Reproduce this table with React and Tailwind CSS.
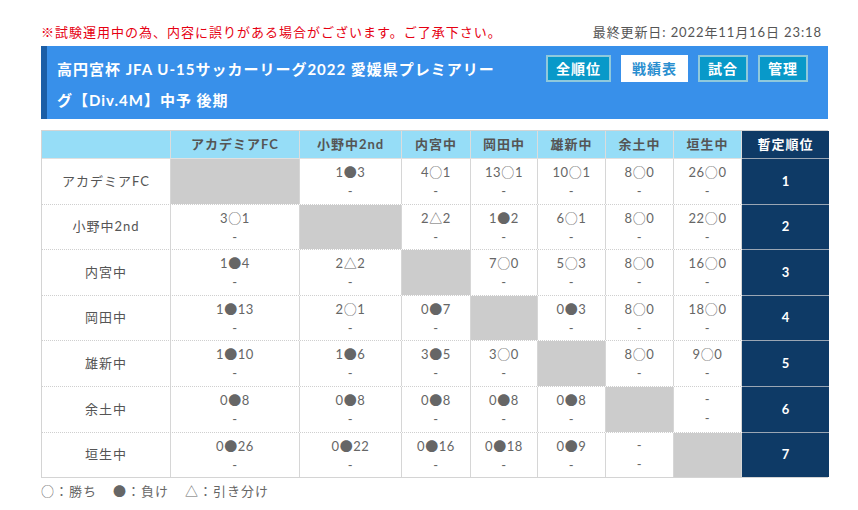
import React from 'react';

const FONT = { fontFamily: 'Lato, "Noto Sans CJK JP", sans-serif' };
const CJK = { fontFamily: '"Noto Sans CJK JP", sans-serif' };

const teams = ['アカデミアFC', '小野中2nd', '内宮中', '岡田中', '雄新中', '余土中', '垣生中'];

// null = 同チーム（グレー）, '-' = 未実施
const results = [
  [null, '1●3', '4○1', '13○1', '10○1', '8○0', '26○0'],
  ['3○1', null, '2△2', '1●2', '6○1', '8○0', '22○0'],
  ['1●4', '2△2', null, '7○0', '5○3', '8○0', '16○0'],
  ['1●13', '2○1', '0●7', null, '0●3', '8○0', '18○0'],
  ['1●10', '1●6', '3●5', '3○0', null, '8○0', '9○0'],
  ['0●8', '0●8', '0●8', '0●8', '0●8', null, '-'],
  ['0●26', '0●22', '0●16', '0●18', '0●9', '-', null],
];

const cols = 'grid grid-cols-[129px_129px_102px_69px_67px_68px_68px_68px_87px]';

// 記号だけ全角フォントで表示
const Score = ({ text }) => {
  const m = text.match(/^(\d+)([○●△])(\d+)$/);
  if (!m) return <span>{text}</span>;
  return (
    <span>
      {m[1]}
      <span style={CJK}>{m[2]}</span>
      {m[3]}
    </span>
  );
};

const NavButton = ({ label, active }) => (
  <button
    className={
      active
        ? 'h-[27px] px-[9px] bg-white border-2 border-white text-[#2a8fd0] text-[14px] font-bold tracking-[1px]'
        : 'h-[27px] px-[8px] bg-[#0899c9] border-2 border-[#8fc9dc] text-white text-[14px] font-bold tracking-[1px]'
    }
  >
    {label}
  </button>
);

export default function App() {
  return (
    <div className="w-[858px] h-[510px] bg-white" style={FONT}>
      <div className="ml-[41px] w-[787px] pt-[22px]">
        {/* 注意書き・更新日 */}
        <div className="flex justify-between items-center h-[20px] text-[13px] leading-[20px]">
          <span className="text-[#e60012] tracking-[1px]">※試験運用中の為、内容に誤りがある場合がございます。ご了承下さい。</span>
          <span className="text-[#555] pr-[6px] tracking-[0.9px]">最終更新日: 2022年11月16日 23:18</span>
        </div>

        {/* タイトルバー */}
        <div className="mt-[4px] h-[73px] bg-[#3890ea] border-l-[6px] border-[#1b5ea6] flex justify-between pl-[10px] pr-[20px]">
          <h1 className="w-[448px] text-white font-bold text-[15px] leading-[31px] pt-[8px] tracking-[1px]">
            高円宮杯 JFA U-15サッカーリーグ2022 愛媛県プレミアリーグ【Div.4M】中予 後期
          </h1>
          <div className="flex gap-[10px] pt-[9px] items-start">
            <NavButton label="全順位" />
            <NavButton label="戦績表" active />
            <NavButton label="試合" />
            <NavButton label="管理" />
          </div>
        </div>

        {/* 戦績表 */}
        <div className="mt-[11px] border border-[#d4d4d4]">
          <div className={`${cols} h-[27px] text-[13px] font-bold`}>
            {['', ...teams].map((t, i) => (
              <div
                key={i}
                className="bg-[#96ddf7] border-r border-[#dcdcdc] text-[#555] flex items-center justify-center tracking-[1px]"
              >
                {t}
              </div>
            ))}
            <div className="bg-[#0e3a66] text-white flex items-center justify-center tracking-[1px]">暫定順位</div>
          </div>

          {teams.map((team, r) => (
            <div
              key={team}
              className={`${cols} h-[45.6px] text-[13px] text-[#666] ${r > 0 ? 'border-t border-dotted border-[#cfcfcf]' : 'border-t border-[#e0e0e0]'}`}
            >
              <div className="border-r border-[#d6d6d6] flex items-center justify-center text-[#555] tracking-[1px]">
                {team}
              </div>
              {results[r].map((res, c) =>
                res === null ? (
                  <div key={c} className="bg-[#cccccc] border-r border-[#d6d6d6]" />
                ) : (
                  <div
                    key={c}
                    className="border-r border-[#d6d6d6] flex flex-col items-center pt-[3px] leading-[19px] tracking-[0.6px]"
                  >
                    <Score text={res} />
                    <span>-</span>
                  </div>
                )
              )}
              <div className="bg-[#0e3a66] text-white font-bold flex items-center justify-center border-t border-[#9aa6b4] -mt-px">
                {r + 1}
              </div>
            </div>
          ))}
        </div>

        {/* 凡例 */}
        <div className="mt-[3px] text-[13px] text-[#666] flex gap-[16px] leading-[20px] tracking-[1px]">
          <span><span style={CJK}>○</span>：勝ち</span>
          <span><span style={CJK}>●</span>：負け</span>
          <span><span style={CJK}>△</span>：引き分け</span>
        </div>
      </div>
    </div>
  );
}
